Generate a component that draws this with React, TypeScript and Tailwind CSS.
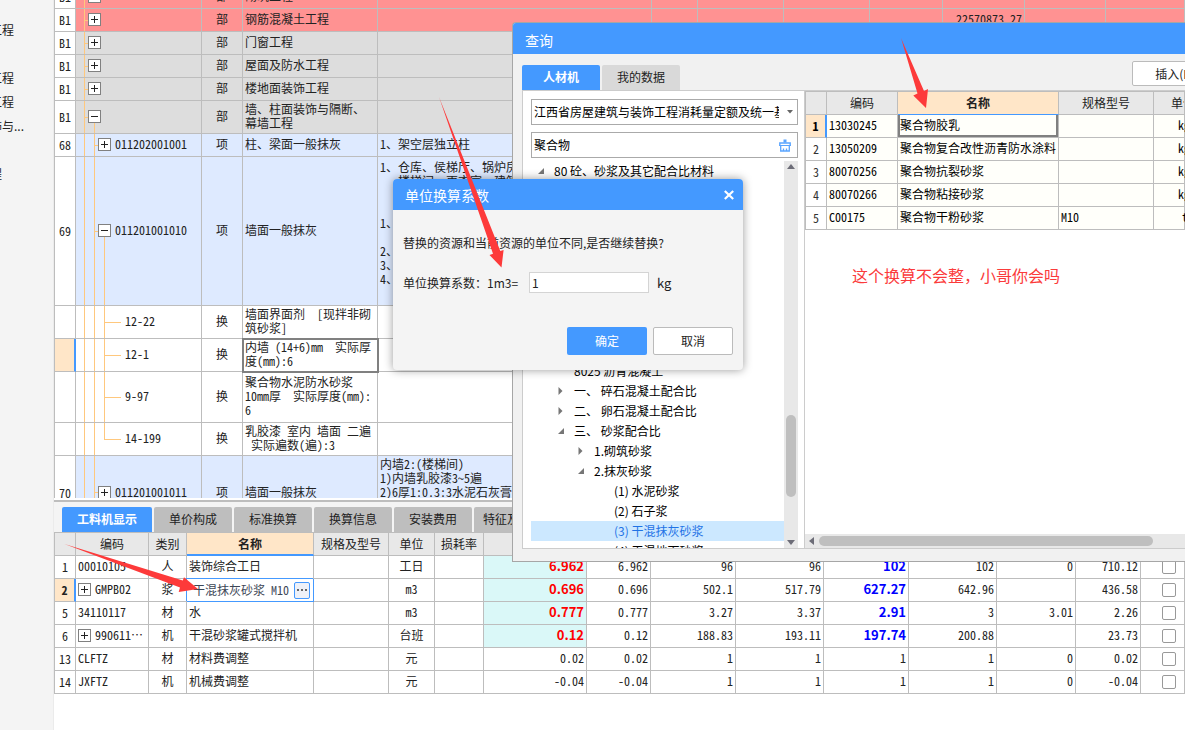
import React from "react";

type Level = 1 | 2 | 3;

interface BillRow {
  no: string;
  height: string;
  tone: string;
  level: Level;
  box?: "plus" | "minus";
  last?: boolean;
  code?: string;
  kind: string;
  name: string;
  spec?: string;
  total?: string;
  active?: boolean;
}

const RED = "bg-[#ff9292]";
const GRAY = "bg-[#dddddd]";
const BLUE = "bg-[#deeaff]";
const WHITE = "bg-white";

const billRows: BillRow[] = [
  { no: "B1", height: "h-[23px]", tone: RED, level: 1, box: "plus", kind: "部", name: "砌筑工程" },
  { no: "B1", height: "h-[23px]", tone: RED, level: 1, box: "plus", kind: "部", name: "钢筋混凝土工程", total: "22570873.27" },
  { no: "B1", height: "h-[23px]", tone: GRAY, level: 1, box: "plus", kind: "部", name: "门窗工程" },
  { no: "B1", height: "h-[23px]", tone: GRAY, level: 1, box: "plus", kind: "部", name: "屋面及防水工程" },
  { no: "B1", height: "h-[23px]", tone: GRAY, level: 1, box: "plus", kind: "部", name: "楼地面装饰工程" },
  { no: "B1", height: "h-[33px]", tone: GRAY, level: 1, box: "minus", kind: "部", name: "墙、柱面装饰与隔断、\n幕墙工程" },
  { no: "68", height: "h-[23px]", tone: BLUE, level: 2, box: "plus", code: "011202001001", kind: "项", name: "柱、梁面一般抹灰", spec: "1、架空层独立柱" },
  {
    no: "69", height: "h-[149px]", tone: BLUE, level: 2, box: "minus", code: "011201001010", kind: "项", name: "墙面一般抹灰",
    spec: "1、仓库、侯梯厅、锅炉房、\n   楼梯间、更衣室、建筑\n\n\n1、\n\n2、\n3、\n4、\n ",
  },
  { no: "", height: "h-[33px]", tone: WHITE, level: 3, code: "12-22", kind: "换", name: "墙面界面剂  [现拌非砌\n筑砂浆]" },
  { no: "", height: "h-[33px]", tone: WHITE, level: 3, code: "12-1", kind: "换", name: "内墙 (14+6)mm  实际厚\n度(mm):6", active: true },
  { no: "", height: "h-[51px]", tone: WHITE, level: 3, code: "9-97", kind: "换", name: "聚合物水泥防水砂浆\n10mm厚  实际厚度(mm):\n6" },
  { no: "", height: "h-[33px]", tone: WHITE, level: 3, last: true, code: "14-199", kind: "换", name: "乳胶漆 室内 墙面 二遍\n 实际遍数(遍):3" },
  {
    no: "70", height: "h-[74px]", tone: BLUE, level: 2, box: "plus", code: "011201001011", kind: "项", name: "墙面一般抹灰",
    spec: "内墙2:(楼梯间)\n1)内墙乳胶漆3~5遍\n2)6厚1:0.3:3水泥石灰膏\n \n ",
  },
];

interface Resource {
  no: string;
  code: string;
  expandable?: boolean;
  kind: string;
  name: string;
  unit: string;
  qty: string;
  tinted?: boolean;
  values: string[];
}

const resources: Resource[] = [
  { no: "1", code: "00010105", kind: "人", name: "装饰综合工日", unit: "工日", qty: "6.962", tinted: true, values: ["6.962", "96", "96", "102", "102", "0", "710.12"] },
  { no: "2", code: "GMPB02", expandable: true, kind: "浆", name: "干混抹灰砂浆 M10", unit: "m3", qty: "0.696", tinted: true, values: ["0.696", "502.1", "517.79", "627.27", "642.96", "", "436.58"] },
  { no: "5", code: "34110117", kind: "材", name: "水", unit: "m3", qty: "0.777", tinted: true, values: ["0.777", "3.27", "3.37", "2.91", "3", "3.01", "2.26"] },
  { no: "6", code: "990611⋯", expandable: true, kind: "机", name: "干混砂浆罐式搅拌机", unit: "台班", qty: "0.12", tinted: true, values: ["0.12", "188.83", "193.11", "197.74", "200.88", "", "23.73"] },
  { no: "13", code: "CLFTZ", kind: "材", name: "材料费调整", unit: "元", qty: "0.02", values: ["0.02", "1", "1", "1", "1", "0", "0.02"] },
  { no: "14", code: "JXFTZ", kind: "机", name: "机械费调整", unit: "元", qty: "-0.04", values: ["-0.04", "1", "1", "1", "1", "0", "-0.04"] },
];

const found = [
  { code: "13030245", name: "聚合物胶乳", model: "", unit: "kg" },
  { code: "13050209", name: "聚合物复合改性沥青防水涂料", model: "", unit: "kg" },
  { code: "80070256", name: "聚合物抗裂砂浆", model: "", unit: "kg" },
  { code: "80070266", name: "聚合物粘接砂浆", model: "", unit: "kg" },
  { code: "C00175", name: "聚合物干粉砂浆", model: "M10", unit: "t" },
];

interface TreeItem {
  text: string;
  indent: string;
  mark?: "open" | "closed";
  selected?: boolean;
}

const treeItems: TreeItem[] = [
  { text: "80 砼、砂浆及其它配合比材料", indent: "pl-[4px]", mark: "open" },
  { text: "8001 水泥砂浆", indent: "pl-[24px]" },
  { text: "8003 石灰砂浆", indent: "pl-[24px]" },
  { text: "8005 混合砂浆", indent: "pl-[24px]" },
  { text: "8007 特种砂浆", indent: "pl-[24px]" },
  { text: "8009 其他砂浆", indent: "pl-[24px]" },
  { text: "8011 灰浆", indent: "pl-[24px]" },
  { text: "8013 石子浆", indent: "pl-[24px]" },
  { text: "8015 胶泥", indent: "pl-[24px]" },
  { text: "8021 普通混凝土", indent: "pl-[24px]" },
  { text: "8025 沥青混凝土", indent: "pl-[24px]" },
  { text: "一、 碎石混凝土配合比", indent: "pl-[24px]", mark: "closed" },
  { text: "二、 卵石混凝土配合比", indent: "pl-[24px]", mark: "closed" },
  { text: "三、 砂浆配合比", indent: "pl-[24px]", mark: "open" },
  { text: "1.砌筑砂浆", indent: "pl-[44px]", mark: "closed" },
  { text: "2.抹灰砂浆", indent: "pl-[44px]", mark: "open" },
  { text: "(1) 水泥砂浆", indent: "pl-[64px]" },
  { text: "(2) 石子浆", indent: "pl-[64px]" },
  { text: "(3) 干混抹灰砂浆", indent: "pl-[64px]", selected: true },
  { text: "(4) 干混地面砂浆", indent: "pl-[64px]" },
];

const frame = "border-r border-b border-[#bdbdbd]";
const bare = `${frame} p-0`;
const cell = `${frame} px-0 pt-0 pb-0.5`;
const textCell = `${frame} pt-0 pr-0 pb-0.5 pl-0.5`;
const numCell = `${frame} pt-0 pr-0.5 pb-0.5 pl-0 text-right`;
const grid = "w-full table-fixed border-separate border-spacing-0 text-xs leading-[14px]";
const half = "[font-feature-settings:'hwid']";
const strong = "text-[13px] leading-[14px] font-bold [font-feature-settings:normal]";

function Toggle({ kind, className = "" }: { kind: "plus" | "minus"; className?: string }) {
  return (
    <button
      type="button"
      aria-label={kind === "plus" ? "展开" : "折叠"}
      className={`flex size-[13px] shrink-0 items-center justify-center border border-[#808080] bg-white ${className}`}
    >
      <svg viewBox="0 0 9 9" className="size-[9px]" shapeRendering="crispEdges">
        <rect x="1" y="4" width="7" height="1" fill="#222" />
        {kind === "plus" && <rect x="4" y="1" width="1" height="7" fill="#222" />}
      </svg>
    </button>
  );
}

/* One vertical guide line of the outline; `tick` adds the branch to the node on its right. */
function Guide({ width, tick, elbow }: { width: string; tick?: boolean; elbow?: boolean }) {
  return (
    <span className={`flex shrink-0 flex-col self-stretch ${width}`}>
      <span className={`flex-1 border-l border-[#ffc87d] ${tick ? "border-b" : ""}`} />
      <span className={`flex-1 ${elbow ? "" : "border-l border-[#ffc87d]"}`} />
    </span>
  );
}

function OutlineCell({ row }: { row: BillRow }) {
  return (
    <div className="flex h-full items-center pl-2">
      <Guide width={row.level === 1 ? "w-1" : "w-[10px]"} tick={row.level === 1} />
      {row.level >= 2 && <Guide width={row.level === 2 ? "w-1" : "w-[10px]"} tick={row.level === 2} />}
      {row.level === 3 && <Guide width="w-[17px]" tick elbow={row.last} />}
      {row.box && (
        <span className="flex flex-col items-center self-stretch">
          <span className="grow basis-0" />
          <Toggle kind={row.box} />
          <span className={`grow basis-px ${row.box === "minus" ? "border-l border-[#ffc87d]" : ""}`} />
        </span>
      )}
      <span className="pb-0.5 pl-1">{row.code}</span>
    </div>
  );
}

function BillTable() {
  return (
    <table className={`${grid} ${half} -mt-[14px]`}>
      <colgroup>
        <col className="w-[21px]" />
        <col className="w-[126px]" />
        <col className="w-[41px]" />
        <col className="w-[135px]" />
        <col className="w-[274px]" />
        <col className="w-[46px]" />
        <col className="w-[86px]" />
        <col className="w-[86px]" />
        <col className="w-[73px]" />
        <col className="w-[82px]" />
        <col className="w-[81px]" />
        <col />
      </colgroup>
      <tbody>
        {billRows.map((r, i) => (
          <tr key={i} className={`${r.height} ${r.tone}`}>
            <th
              scope="row"
              className={`${bare} ${r.height} text-center font-normal ${r.active ? "border-r-2 border-r-[#4499ff] bg-[#ffe6c8]" : "bg-white"}`}
            >
              {r.no}
            </th>
            <td className={`${bare} ${r.height}`}>
              <OutlineCell row={r} />
            </td>
            <td className={`${cell} text-center`}>{r.kind}</td>
            <td
              className={`${textCell} overflow-hidden whitespace-pre ${r.active ? "outline-2 -outline-offset-1 outline-[#808080]" : ""}`}
            >
              {r.name}
            </td>
            <td className={`${textCell} overflow-hidden whitespace-pre`}>{r.spec}</td>
            <td className={cell} />
            <td className={cell} />
            <td className={cell} />
            <td className={cell} />
            <td className={numCell}>{r.total}</td>
            <td className={cell} />
            <td className={cell} />
          </tr>
        ))}
      </tbody>
    </table>
  );
}

const headCell = "border-r border-b border-[#bdbdbd] bg-[#e8e8e8] p-0 text-center font-normal h-[23px] whitespace-nowrap overflow-hidden";

function ResourceTable() {
  return (
    <table className={`${grid} border-t border-[#bdbdbd] bg-white`}>
      <colgroup>
        <col className="w-[21px]" />
        <col className="w-[73px]" />
        <col className="w-[38px]" />
        <col className="w-[127px]" />
        <col className="w-[75px]" />
        <col className="w-[46px]" />
        <col className="w-[49px]" />
        <col className="w-[103px]" />
        <col className="w-[64px]" />
        <col className="w-[85px]" />
        <col className="w-[88px]" />
        <col className="w-[85px]" />
        <col className="w-[88px]" />
        <col className="w-[79px]" />
        <col className="w-[65px]" />
        <col />
      </colgroup>
      <thead>
        <tr>
          <th className={headCell} />
          <th className={headCell}>编码</th>
          <th className={headCell}>类别</th>
          <th className="h-[23px] border-r border-b-2 border-[#bdbdbd] border-b-[#4499ff] bg-[#ffe6c8] p-0 text-center font-bold">名称</th>
          <th className={headCell}>规格及型号</th>
          <th className={headCell}>单位</th>
          <th className={headCell}>损耗率</th>
          <th className={headCell}>含量</th>
          <th className={headCell}>数量</th>
          <th className={headCell}>定额价</th>
          <th className={headCell}>除税价</th>
          <th className={headCell}>市场价</th>
          <th className={headCell}>含税价</th>
          <th className={headCell}>税率</th>
          <th className={headCell}>合价</th>
          <th className={headCell} />
        </tr>
      </thead>
      <tbody className={half}>
        {resources.map((r) => {
          const editing = r.no === "2";
          return (
            <tr key={r.no}>
              <th
                scope="row"
                className={`${bare} h-[23px] text-center ${editing ? "border-r-2 border-r-[#4499ff] bg-[#ffe6c8] font-bold" : "font-normal"}`}
              >
                {r.no}
              </th>
              <td className={textCell}>
                <div className="flex items-center gap-1 overflow-hidden whitespace-nowrap">
                  {r.expandable && <Toggle kind="plus" />}
                  {r.code}
                </div>
              </td>
              <td className={`${cell} text-center`}>{r.kind}</td>
              {editing ? (
                <td className="border-r border-b border-[#4499ff] p-0 shadow-[-1px_-1px_0_0_#4499ff]">
                  <div className="flex items-center pr-[3px] pl-1.5">
                    <input
                      aria-label="名称"
                      defaultValue={r.name}
                      className="min-w-0 flex-1 bg-transparent text-[#3c4656] outline-none"
                    />
                    <button
                      type="button"
                      aria-label="选择"
                      className="flex h-[17px] w-4 items-center justify-center gap-0.5 rounded-xs border border-[#4499ff] bg-[#eef1f8]"
                    >
                      <span className="size-0.5 bg-[#666]" />
                      <span className="size-0.5 bg-[#666]" />
                      <span className="size-0.5 bg-[#666]" />
                    </button>
                  </div>
                </td>
              ) : (
                <td className={`${textCell} overflow-hidden whitespace-nowrap`}>{r.name}</td>
              )}
              <td className={cell} />
              <td className={`${cell} text-center`}>{r.unit}</td>
              <td className={cell} />
              <td className={`${numCell} ${r.tinted ? `bg-[#daf8f8] text-[#ff0000] ${strong}` : ""}`}>{r.qty}</td>
              {r.values.map((v, i) => (
                <td key={i} className={`${numCell} ${i === 3 && r.tinted ? `text-[#0000ff] ${strong}` : ""}`}>
                  {v}
                </td>
              ))}
              <td className={`${frame} py-0 pr-0 pl-[21px]`}>
                <input
                  type="checkbox"
                  aria-label={`锁定 ${r.name}`}
                  className="block size-[14px] appearance-none rounded-xs border border-[#999] bg-white"
                />
              </td>
            </tr>
          );
        })}
      </tbody>
    </table>
  );
}

function SidePanel() {
  return (
    <aside className="w-[54px] shrink-0 overflow-hidden border-r border-[#ebebeb] bg-[#f4f4f4] pt-[18px] text-xs">
      <ul>
        {[
          { t: "工程", w: "w-[14px]" },
          { t: "", w: "w-[14px]" },
          { t: "工程", w: "w-[14px]" },
          { t: "工程", w: "w-[14px]" },
          { t: "饰与...", w: "w-6" },
          { t: "", w: "w-[14px]" },
          { t: "程", w: "w-0.5" },
        ].map((it, i) => (
          <li key={i} className={`flex h-6 items-center justify-end overflow-hidden whitespace-nowrap ${it.w}`}>
            {it.t}
          </li>
        ))}
      </ul>
    </aside>
  );
}

function TreeMark({ mark }: { mark?: "open" | "closed" }) {
  return (
    <svg viewBox="0 0 12 12" className="mr-[7px] size-3 shrink-0" aria-hidden="true">
      {mark === "open" && <path d="M9 3V9H3Z" fill="#767676" />}
      {mark === "closed" && <path d="M3.5 2L7.5 6L3.5 10Z" fill="#767676" />}
    </svg>
  );
}

function LibraryPane() {
  return (
    <div className="flex w-[282px] shrink-0 flex-col border-r border-[#cccccc] pt-2 pr-1.5 pl-2">
      <div className="relative">
        <select aria-label="定额库" className="block h-[26px] w-full appearance-none border border-[#aaaaaa] bg-white pr-[18px] pl-0.5 text-xs text-black">
          <option>江西省房屋建筑与装饰工程消耗量定额及统一基价表</option>
        </select>
        <svg viewBox="0 0 6 4" className="pointer-events-none absolute top-[11px] right-[5px] h-1 w-1.5" aria-hidden="true">
          <path d="M0 0H6L3 3.5Z" fill="#666" />
        </svg>
      </div>
      <div className="mt-[7px] flex h-[26px] items-center border border-[#aaaaaa] bg-white pr-1.5">
        <input aria-label="关键字" defaultValue="聚合物" className="min-w-0 flex-1 pl-0.5 text-xs text-black outline-none" />
        <button type="button" aria-label="清空">
          <svg viewBox="0 0 12 13" className="h-[13px] w-3" fill="none" stroke="#5aa5ff">
            <path d="M6 0.5V3.5" strokeWidth="3" />
            <path d="M0.8 7V4H11.2V7" strokeWidth="1.4" />
            <path d="M0.2 6.5H11.8" strokeWidth="1.2" />
            <path d="M1.7 7V12H10.3V7M4.5 12V9.5M7.5 12V9.5" strokeWidth="1.3" />
          </svg>
        </button>
      </div>
      <div className="mt-[3px] flex min-h-0 flex-1">
        <ul className="min-w-0 flex-1 overflow-hidden">
          {treeItems.map((it) => (
            <li
              key={it.text}
              className={`flex h-5 items-center whitespace-nowrap ${it.indent} ${it.selected ? "bg-[#cce8ff] text-[#1f73e6]" : "text-black"}`}
            >
              <TreeMark mark={it.mark} />
              {it.text}
            </li>
          ))}
        </ul>
        <div className="flex w-[14px] flex-col items-center bg-[#e8e8e8] py-[3px]">
          <svg viewBox="0 0 8 5" className="h-[5px] w-2" aria-hidden="true">
            <path d="M0 5L4 0L8 5Z" fill="#6d6d78" />
          </svg>
          <span className="flex-[246]" />
          <span className="h-[82px] w-[10px] rounded-full bg-[#bfbfbf]" />
          <span className="flex-[43]" />
          <svg viewBox="0 0 8 5" className="h-[5px] w-2" aria-hidden="true">
            <path d="M0 0L4 5L8 0Z" fill="#6d6d78" />
          </svg>
        </div>
      </div>
    </div>
  );
}

function FoundTable() {
  return (
    <table className={`${grid} border-t border-l border-[#bdbdbd]`}>
      <colgroup>
        <col className="w-[21px]" />
        <col className="w-[71px]" />
        <col className="w-[161px]" />
        <col className="w-[95px]" />
        <col />
      </colgroup>
      <thead>
        <tr>
          <th className={headCell} />
          <th className={headCell}>编码</th>
          <th className="h-[23px] border-r border-b border-[#bdbdbd] border-b-[#4499ff] bg-[#ffe6c8] p-0 text-center font-bold">名称</th>
          <th className={headCell}>规格型号</th>
          <th className="h-[23px] overflow-hidden border-r border-b border-[#bdbdbd] bg-[#e8e8e8] py-0 pr-0 pl-[17px] text-left font-normal whitespace-nowrap">单位</th>
        </tr>
      </thead>
      <tbody className={half}>
        {found.map((f, i) => (
          <tr key={f.code} className="bg-[#fffffa] text-black">
            <th
              scope="row"
              className={`${bare} h-[23px] text-center ${i === 0 ? "border-r-2 border-r-[#4499ff] bg-[#ffe6c8] font-bold" : "bg-white font-normal text-[#333]"}`}
            >
              {i + 1}
            </th>
            <td className={textCell}>{f.code}</td>
            <td className={`${bare} h-[23px] whitespace-nowrap`}>
              <div className={`flex h-full items-center ${i === 0 ? "border-x-2 border-b-2 border-[#808080]" : "pb-0.5 pl-0.5"}`}>{f.name}</div>
            </td>
            <td className={textCell}>{f.model}</td>
            <td className={`${frame} pt-0 pr-0 pb-0.5 ${f.unit === "t" ? "pl-7" : "pl-6"}`}>{f.unit}</td>
          </tr>
        ))}
      </tbody>
    </table>
  );
}

function QueryDialog() {
  return (
    <section
      role="dialog"
      aria-label="查询"
      className="absolute top-[22px] right-0 left-[512px] flex h-[540px] flex-col overflow-hidden rounded-tl-sm border-y border-l border-[#a6a6a6] bg-[#f1f1f1]"
    >
      <h2 className="flex h-[31px] shrink-0 items-center bg-[#4499ff] px-3 pt-0.5 text-sm text-white">查询</h2>
      <div className="flex h-9 shrink-0 items-end justify-between pl-[9px]">
        <div className="flex gap-0.5">
          <button type="button" className="h-[25px] w-[78px] rounded-t-xs bg-[#4499ff] pb-0.5 text-xs font-bold text-white">人材机</button>
          <button type="button" className="h-[25px] w-[78px] rounded-t-xs bg-[#d9d9d9] pb-0.5 text-xs">我的数据</button>
        </div>
        <button type="button" className="-mr-[29px] mb-1 h-[25px] w-[82px] rounded-xs border border-[#bbbbbb] bg-white text-xs">
          插入(I)
        </button>
      </div>
      <div className="mb-3 ml-[9px] flex min-h-0 flex-1 border-y border-l border-[#cccccc] bg-white text-xs">
        <LibraryPane />
        <div className="flex min-w-0 flex-1 flex-col justify-between">
          <FoundTable />
          <div className="flex h-[14px] items-center bg-[#e8e8e8] pl-1">
            <svg viewBox="0 0 5 8" className="mr-[5px] h-2 w-[5px]" aria-hidden="true">
              <path d="M5 0L0 4L5 8Z" fill="#6d6d78" />
            </svg>
            <span className="h-[10px] w-[334px] rounded-full bg-[#bfbfbf]" />
          </div>
        </div>
      </div>
    </section>
  );
}

function FactorDialog() {
  return (
    <form
      role="dialog"
      aria-label="单位换算系数"
      onSubmit={(e) => e.preventDefault()}
      className="absolute top-[179px] left-[393px] w-[350px] overflow-hidden rounded-sm bg-[#f4f4f4] pb-[15px] shadow-[0_0_10px_rgba(0,0,0,0.4)]"
    >
      <div className="flex h-[31px] items-center justify-between bg-[#4499ff] px-3 text-white">
        <h2 className="text-sm">单位换算系数</h2>
        <button type="button" aria-label="关闭" className="-mr-[3px]">
          <svg viewBox="0 0 10 10" className="size-[10px]" fill="none" stroke="white" strokeWidth="2.2">
            <path d="M0.8 1L9.2 9M9.2 1L0.8 9" />
          </svg>
        </button>
      </div>
      <div className="px-[10px] text-xs">
        <p className="pt-[25px] leading-4">替换的资源和当前资源的单位不同,是否继续替换?</p>
        <div className="mt-[21px] flex items-center">
          <label htmlFor="factor" className="w-[126px]">单位换算系数：1m3=</label>
          <input id="factor" defaultValue="1" className="h-[21px] w-[120px] border border-[#d4d4d4] bg-white px-0.5" />
          <span className="pl-2 text-[13px]">kg</span>
        </div>
        <div className="mt-[34px] flex justify-end gap-1.5">
          <button type="submit" className="h-7 w-20 rounded-xs bg-[#4499ff] text-white">确定</button>
          <button type="button" className="h-7 w-20 rounded-xs border border-[#bbbbbb] bg-white">取消</button>
        </div>
      </div>
    </form>
  );
}

function Annotations() {
  return (
    <>
      <p className="absolute top-[263px] left-[852px] text-base text-[#fb3b3b]">这个换算不会整，小哥你会吗</p>
      <svg className="pointer-events-none absolute inset-0 size-full" fill="#fd3a3a" aria-hidden="true">
        <path d="M439 97L500.3 251L503.6 250L501.5 267.5L489.5 255L493 253.8Z" />
        <path d="M901 38L924 91L928 89L926 108L913.3 95.5L917.5 93.5Z" />
        <path d="M64.5 544L182.8 580.5L184 577.3L198 589L178.7 592L180 587.5Z" />
      </svg>
    </>
  );
}

export default function App() {
  return (
    <div lang="zh-CN" className="relative flex h-screen overflow-hidden bg-white font-['Noto_Sans_CJK_SC',sans-serif] text-[#222]">
      <SidePanel />
      <main className="flex min-w-0 flex-1 flex-col">
        <div className="min-h-0 flex-1 overflow-hidden border-l border-[#bdbdbd]">
          <BillTable />
        </div>
        <div className="mt-0.5 h-[230px] shrink-0 border-t-2 border-[#bdbdbd]">
          <div className="flex gap-0.5 overflow-hidden bg-[#f4f4f4] pt-[5px] pl-2">
            <button type="button" className="h-[25px] w-[90px] shrink-0 rounded-t-xs bg-[#4499ff] pb-0.5 text-xs font-bold text-white">工料机显示</button>
            {["单价构成", "标准换算", "换算信息", "安装费用", "特征及内容"].map((t) => (
              <button key={t} type="button" className="h-[25px] w-[78px] shrink-0 rounded-t-xs bg-[#bebebe] pb-0.5 text-xs">
                {t}
              </button>
            ))}
          </div>
          <div className="border-l border-[#bdbdbd]">
            <ResourceTable />
          </div>
        </div>
      </main>
      <QueryDialog />
      <FactorDialog />
      <Annotations />
    </div>
  );
}
